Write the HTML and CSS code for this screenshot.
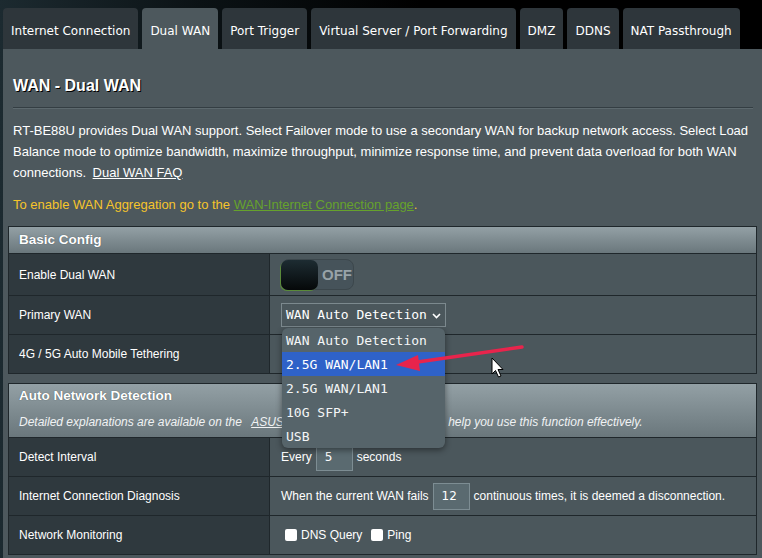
FILE: index.html
```html
<!DOCTYPE html>
<html>
<head>
<meta charset="utf-8">
<link rel="stylesheet" href="styles.css">
</head>
<body>
<div class="page">
  <nav class="tabs">
    <div class="tab">Internet Connection</div>
    <div class="tab active">Dual WAN</div>
    <div class="tab">Port Trigger</div>
    <div class="tab">Virtual Server / Port Forwarding</div>
    <div class="tab">DMZ</div>
    <div class="tab">DDNS</div>
    <div class="tab">NAT Passthrough</div>
  </nav>
  <main class="panel">
    <h1 class="title">WAN - Dual WAN</h1>
    <div class="rule"></div>
    <p class="desc">RT-BE88U provides Dual WAN support. Select Failover mode to use a secondary WAN for backup network access. Select Load Balance mode to optimize bandwidth, maximize throughput, minimize response time, and prevent data overload for both WAN connections. <a class="faq">Dual WAN FAQ</a></p>
    <p class="notice">To enable WAN Aggregation go to the <a class="green">WAN-Internet Connection page</a>.</p>

    <section class="section">
      <div class="sec-head"><div class="sec-title">Basic Config</div></div>
      <div class="row tall">
        <div class="lbl">Enable Dual WAN</div>
        <div class="val">
          <div class="toggle"><span class="knob"></span><span class="off">OFF</span></div>
        </div>
      </div>
      <div class="row">
        <div class="lbl">Primary WAN</div>
        <div class="val">
          <div class="select-wrap">
            <div class="select">WAN Auto Detection<svg class="chev" width="9" height="6" viewBox="0 0 9 6"><polyline points="1,1 4.5,4.5 8,1" fill="none" stroke="#fff" stroke-width="1.6"/></svg></div>
            <ul class="menu">
              <li>WAN Auto Detection</li>
              <li class="hl">2.5G WAN/LAN1</li>
              <li>2.5G WAN/LAN1</li>
              <li>10G SFP+</li>
              <li>USB</li>
            </ul>
          </div>
        </div>
      </div>
      <div class="row">
        <div class="lbl">4G / 5G Auto Mobile Tethering</div>
        <div class="val"></div>
      </div>
    </section>

    <section class="section second">
      <div class="sec-head big">
        <div class="sec-title">Auto Network Detection</div>
        <div class="sec-note">Detailed explanations are available on the <u class="asus">ASUS Support website WAN FAQ</u> to help you use this function effectively.</div>
      </div>
      <div class="row">
        <div class="lbl">Detect Interval</div>
        <div class="val">Every<span class="num">5</span>seconds</div>
      </div>
      <div class="row">
        <div class="lbl">Internet Connection Diagnosis</div>
        <div class="val">When the current WAN fails<span class="num">12</span>continuous times, it is deemed a disconnection.</div>
      </div>
      <div class="row">
        <div class="lbl">Network Monitoring</div>
        <div class="val"><span class="cb"></span>DNS Query<span class="cb second-cb"></span>Ping</div>
      </div>
    </section>
  </main>
</div>
<svg class="overlay" width="762" height="558" viewBox="0 0 762 558">
  <line x1="522" y1="347" x2="414" y2="362.5" stroke="#e8244c" stroke-width="3.5" stroke-linecap="round"/>
  <polygon points="396,365 418,355 420,371" fill="#e8244c"/>
  <path d="M492 358 L492 374 L495.5 370.5 L498.5 377 L501 376 L498 369.5 L503 369.5 Z" fill="#fff" stroke="#000" stroke-width="1" stroke-linejoin="round"/>
</svg>
</body>
</html>
```
FILE: styles.css
```css
* { box-sizing: border-box; }
html, body { margin: 0; padding: 0; }
body {
  width: 762px;
  height: 558px;
  overflow: hidden;
  position: relative;
  background: linear-gradient(90deg, #1c2a30 0, #0b1215 200px, #000 420px);
  font-family: "Liberation Sans", Arial, sans-serif;
  color: #fff;
}
.page { display: flex; flex-direction: column; height: 558px; }
.tabs {
  display: flex;
  gap: 4px;
  padding: 8px 0 0 3px;
  height: 49px;
}
.tab {
  height: 41px;
  line-height: 41px;
  padding: 3px 8px 0 8px;
  background: #2e363b;
  border-radius: 4px 4px 0 0;
  font-family: "DejaVu Sans", Verdana, sans-serif;
  font-size: 12px;
  color: #fff;
  white-space: nowrap;
}
.tab.active { background: #4d585d; }
.panel {
  flex: 1;
  margin-left: 3px;
  background: #4d585d;
  padding: 0 5px;
}
.title {
  margin: 27px 5px 0;
  font-size: 16px;
  line-height: 20px;
  font-weight: bold;
  text-shadow: 1px 1px 0 #000;
}
.rule {
  margin: 11px 4px 0 5px;
  border-top: 1px solid #343e43;
  border-bottom: 1px solid #5d696e;
}
.desc {
  margin: 11px 5px 0;
  font-size: 13px;
  line-height: 21px;
}
.faq { color: #fff; text-decoration: underline; padding-left: 3px; }
.notice {
  margin: 11px 5px 0;
  font-size: 13px;
  line-height: 21px;
  color: #f6c42b;
}
.green { color: #66a22c; text-decoration: underline; }
.section {
  margin-top: 11px;
  border: 1px solid #1f272b;
  font-size: 12px;
}
.section.second { margin-top: 9px; }
.sec-head {
  height: 26px;
  padding-left: 10px;
  background: linear-gradient(180deg, #93a0a5 0, #6a777c 100%);
  display: flex;
  flex-direction: column;
  justify-content: center;
}
.sec-head.big { height: 53px; justify-content: flex-start; padding-top: 4px; }
.sec-title {
  font-size: 13.5px;
  line-height: 16px;
  font-weight: bold;
  text-shadow: 0 0 1px #3a4449;
}
.sec-note {
  margin-top: 10px;
  font-style: italic;
  line-height: 16px;
  color: #f0f2f3;
  white-space: nowrap;
}
.asus { margin-left: 6px; }
.row {
  display: grid;
  grid-template-columns: 261px 1fr;
  height: 39px;
  border-top: 1px solid #1f272b;
}
.row.tall { height: 42px; }
.lbl {
  background: #2f393e;
  border-right: 1px solid #1f272b;
  padding-left: 10px;
  display: flex;
  align-items: center;
}
.val {
  background: #4b575c;
  padding-left: 11px;
  display: flex;
  align-items: center;
  white-space: nowrap;
}
.toggle {
  width: 73px;
  height: 31px;
  border-radius: 8px;
  background: #46535a;
  border: 1px solid #3c474c;
  display: flex;
  align-items: center;
}
.knob {
  width: 37px;
  height: 30px;
  margin-left: -1px;
  border-radius: 7px;
  background: linear-gradient(180deg, #1d2c32 0, #050809 100%);
  box-shadow: -1px 1px 0 #5a8a3a;
}
.off {
  margin-left: 4px;
  font-size: 15px;
  font-weight: bold;
  color: #98a3a8;
}
.select-wrap { position: relative; }
.select {
  width: 165px;
  height: 24px;
  border: 1px solid #7c898e;
  padding-left: 4px;
  font-family: "DejaVu Sans Mono", monospace;
  font-size: 13px;
  line-height: 22px;
  display: flex;
  align-items: center;
  gap: 5px;
}
.chev { margin-top: 1px; }
.menu {
  position: absolute;
  left: 1px;
  top: 25px;
  width: 163px;
  margin: 0;
  padding: 0;
  list-style: none;
  background: #56646a;
  border-radius: 6px;
  box-shadow: 0 2px 6px rgba(0, 0, 0, 0.45);
  font-family: "DejaVu Sans Mono", monospace;
  font-size: 13px;
  overflow: hidden;
  z-index: 2;
}
.menu li {
  height: 24px;
  line-height: 25px;
  padding-left: 4px;
  color: #f4f6f7;
}
.menu li.hl { background: #2f62c8; color: #fff; }
.num {
  display: inline-block;
  width: 37px;
  height: 27px;
  line-height: 25px;
  margin: 0 4px 0 4px;
  padding-left: 8px;
  background: #5a6a70;
  border: 1px solid #7d8d93;
  font-family: "DejaVu Sans", sans-serif;
  font-size: 12px;
}
.cb {
  display: inline-block;
  width: 12px;
  height: 12px;
  margin: 0 4px 0 4px;
  background: #fff;
  border-radius: 2px;
}
.second-cb { margin-left: 9px; }
.overlay {
  position: absolute;
  left: 0;
  top: 0;
  pointer-events: none;
  z-index: 5;
}
```
